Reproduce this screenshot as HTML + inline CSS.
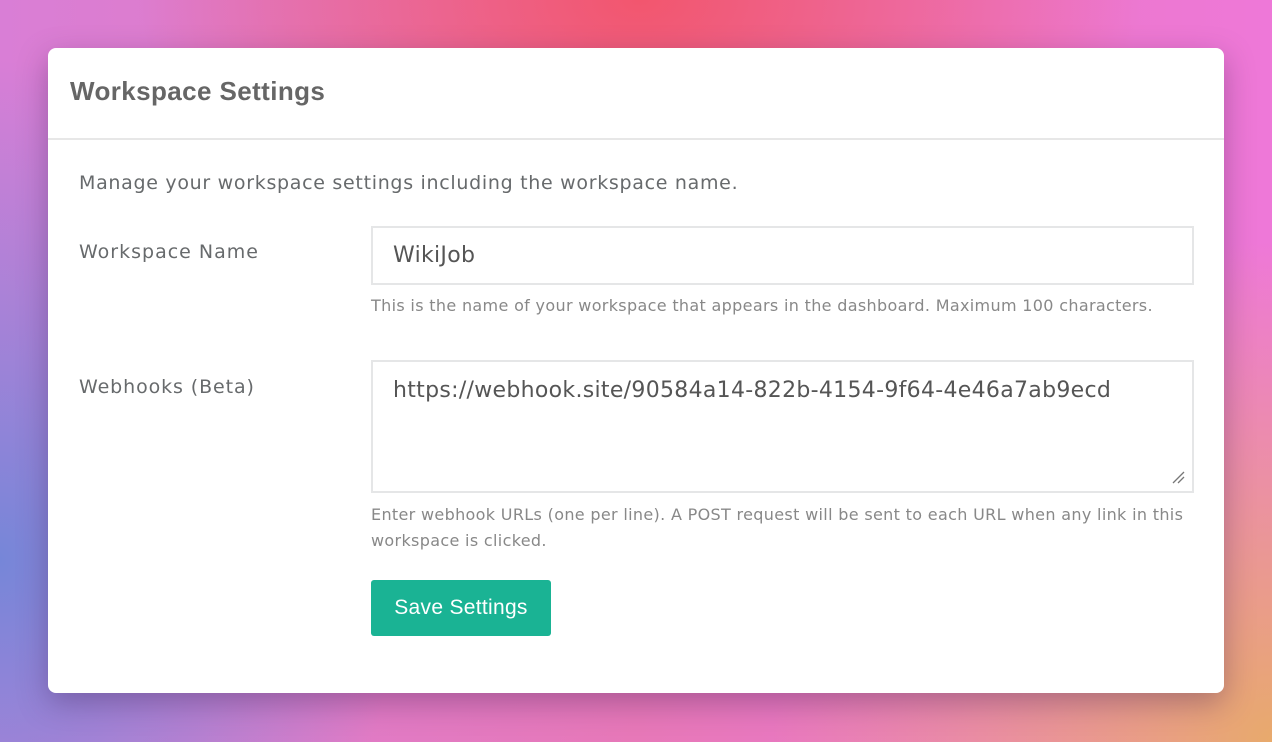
<!DOCTYPE html>
<html><head><style>
html,body{margin:0;width:1272px;height:742px;overflow:hidden}
body{font-family:"DejaVu Sans",sans-serif;position:relative;
background:
radial-gradient(ellipse 500px 300px at 640px 0px,#f2566e 0%,rgba(242,86,110,0) 100%),
radial-gradient(ellipse 500px 500px at 1272px 742px,#e8aa6c 0%,rgba(232,170,108,0) 100%),
radial-gradient(ellipse 400px 500px at 0px 560px,#7686d8 0%,rgba(118,134,216,0) 100%),
linear-gradient(90deg,#d97ed6,#e778b8 50%,#ee78d8);}
.card{position:absolute;left:48px;top:48px;width:1176px;height:645px;background:#fff;border-radius:8px;box-shadow:0 10px 30px rgba(60,30,80,.35)}
.hd{height:92px;border-bottom:2px solid #e7e7e7;box-sizing:border-box}
.hd h1{margin:0;position:absolute;left:22px;top:28px;font-family:"Liberation Sans",sans-serif;font-size:26px;font-weight:bold;color:#666;letter-spacing:0.4px}
.t{position:absolute;color:#676a6c;white-space:nowrap}
.in{position:absolute;left:323px;width:823px;border:2px solid #e5e6e7;box-sizing:border-box;background:#fff}
.help{position:absolute;left:323px;color:#888;font-size:16px;line-height:26px}
.btn{position:absolute;left:323px;top:532px;width:180px;height:56px;background:#1ab394;border-radius:3px;color:#fff;font-family:"Liberation Sans",sans-serif;font-size:21px;text-align:center;line-height:56px;letter-spacing:0.3px}
</style></head><body>
<div class="card">
<div class="hd"><h1>Workspace Settings</h1></div>
<div class="t" style="left:31px;top:124px;font-size:19px;letter-spacing:0.7px">Manage your workspace settings including the workspace name.</div>
<div class="t" style="left:31px;top:193px;font-size:19px;letter-spacing:1px">Workspace Name</div>
<div class="in" style="top:178px;height:59px"><div class="t" style="left:20px;top:15px;font-size:22px;color:#555;letter-spacing:0.3px">WikiJob</div></div>
<div class="help" style="top:245px;white-space:nowrap;letter-spacing:0.33px">This is the name of your workspace that appears in the dashboard. Maximum 100 characters.</div>
<div class="t" style="left:31px;top:328px;font-size:19px;letter-spacing:0.9px">Webhooks (Beta)</div>
<div class="in" style="top:312px;height:133px"><div class="t" style="left:20px;top:16px;font-size:22px;color:#555;letter-spacing:0.3px">https://webhook.site/90584a14-822b-4154-9f64-4e46a7ab9ecd</div>
<svg style="position:absolute;right:7px;bottom:7px" width="14" height="14"><path d="M2 13L13 2M7 13L13 7" stroke="#777" stroke-width="1.3"/></svg></div>
<div class="help" style="top:454px;width:823px;letter-spacing:0.33px">Enter webhook URLs (one per line). A POST request will be sent to each URL when any link in this workspace is clicked.</div>
<div class="btn">Save Settings</div>
</div>
</body></html>
